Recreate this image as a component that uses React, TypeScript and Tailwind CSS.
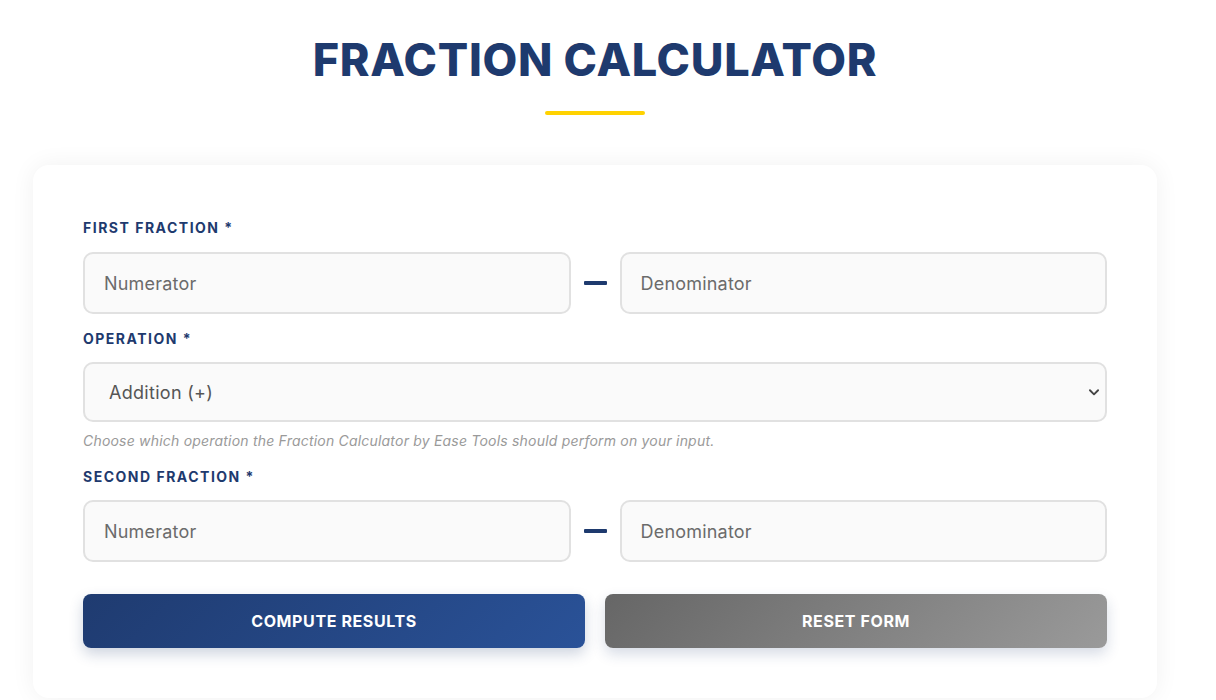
import React from "react";

const font = { fontFamily: "Inter, 'Open Sans', sans-serif" };

function Label({ children }: { children: React.ReactNode }) {
  return (
    <div className="text-[14px] font-bold tracking-[1.5px] text-[#1e3a6e] leading-[20px] uppercase">
      {children}
    </div>
  );
}

function FracInput({ placeholder }: { placeholder: string }) {
  return (
    <input
      placeholder={placeholder}
      className="w-full h-[62px] rounded-[10px] border-2 border-[#e1e1e1] bg-[#fafafa] px-[19px] text-[18px] tracking-[0.2px] text-[#555] placeholder:text-[#6b6b6b] outline-none"
      style={font}
    />
  );
}

function FracRow() {
  return (
    <div className="flex items-center">
      <div className="flex-1">
        <FracInput placeholder="Numerator" />
      </div>
      <div className="w-[49px] flex justify-center">
        <div className="w-[23px] h-[4px] bg-[#1e3a6e] rounded-[1px]" />
      </div>
      <div className="flex-1">
        <FracInput placeholder="Denominator" />
      </div>
    </div>
  );
}

export default function App() {
  return (
    <div className="min-h-[700px] bg-white" style={font}>
      <div className="w-[1190px] px-[33px] pt-[37px]">
        <h1 className="text-center text-[45px] leading-[46px] font-extrabold tracking-[0.7px] text-[#1e3a6e]">
          FRACTION CALCULATOR
        </h1>
        <div className="mx-auto mt-[28px] w-[100px] h-[4px] rounded-full bg-[#ffd200]" />
        <div className="mt-[50px] rounded-[16px] bg-white shadow-[0_0_24px_rgba(0,0,0,0.06)] px-[50px] pt-[53px] pb-[50px]">
          <Label>First Fraction *</Label>
          <div className="mt-[14px]">
            <FracRow />
          </div>
          <div className="mt-[15px]">
            <Label>Operation *</Label>
          </div>
          <div className="mt-[13px]">
            <div className="h-[60px] rounded-[10px] border-2 border-[#e1e1e1] bg-[#fafafa] flex items-center pl-[24px] pr-[4px] text-[18px] tracking-[0.3px] text-[#555]">
              <span className="flex-1">Addition (+)</span>
              <svg width="14" height="14" viewBox="0 0 12 12">
                <path d="M2.5 4.5 L6 8 L9.5 4.5" fill="none" stroke="#444" strokeWidth="1.6" strokeLinecap="round" strokeLinejoin="round" />
              </svg>
            </div>
          </div>
          <div className="mt-[10px] text-[14px] tracking-[0.2px] italic text-[#9a9a9a] leading-[18px]">
            Choose which operation the Fraction Calculator by Ease Tools should perform on your input.
          </div>
          <div className="mt-[17px]">
            <Label>Second Fraction *</Label>
          </div>
          <div className="mt-[13px]">
            <FracRow />
          </div>
          <div className="mt-[32px] grid grid-cols-2 gap-[20px]">
            <button className="h-[54px] rounded-[8px] bg-[linear-gradient(135deg,#1f3b70_0%,#2a5298_100%)] text-white text-[16px] font-bold tracking-[0.6px] shadow-[0_6px_14px_rgba(30,58,110,0.22)]">
              COMPUTE RESULTS
            </button>
            <button className="h-[54px] rounded-[8px] bg-[linear-gradient(135deg,#666666_0%,#9a9a9a_100%)] text-white text-[16px] font-bold tracking-[0.6px] shadow-[0_6px_14px_rgba(30,58,110,0.18)]">
              RESET FORM
            </button>
          </div>
        </div>
      </div>
    </div>
  );
}
